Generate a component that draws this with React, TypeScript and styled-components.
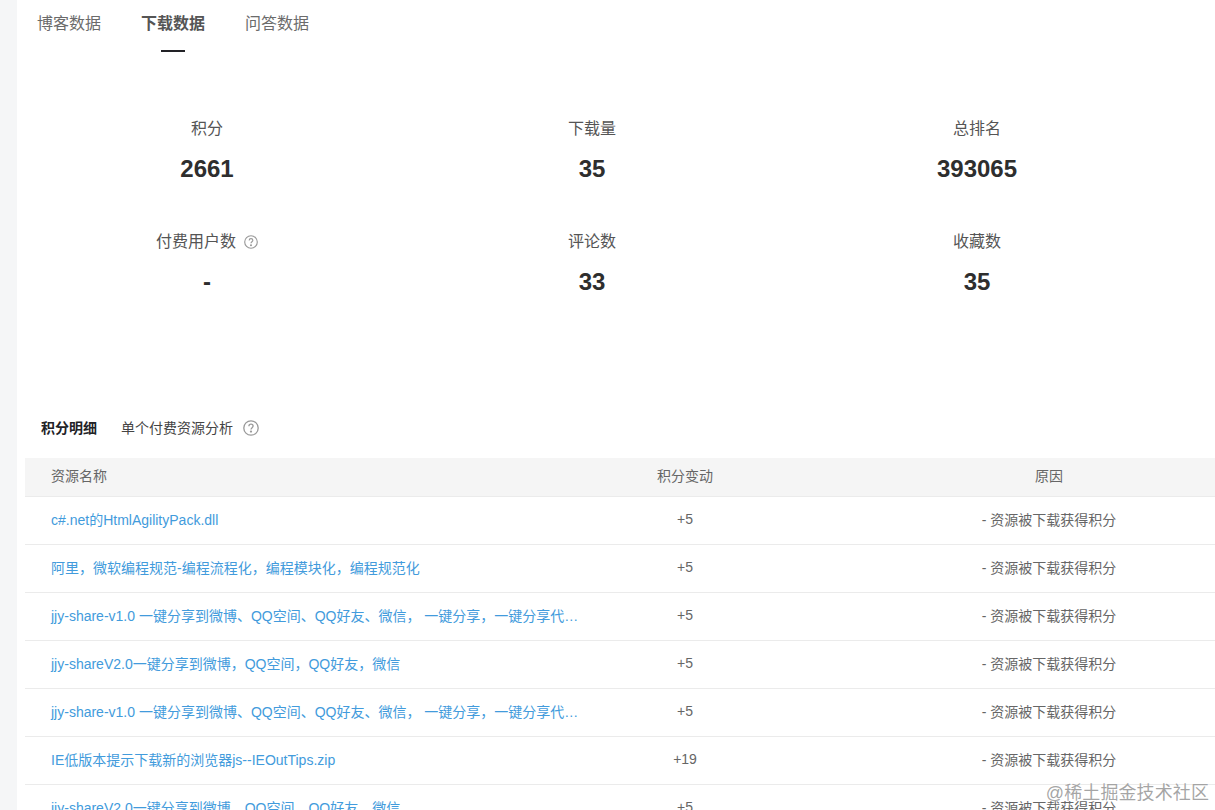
import React from 'react'
import styled, { createGlobalStyle } from 'styled-components'

const GlobalStyle = createGlobalStyle`
  html, body {
    margin: 0;
    padding: 0;
    height: 810px;
    overflow: hidden;
    background: #f5f6f7;
    font-family: "Liberation Sans", "Noto Sans CJK SC", sans-serif;
  }
  * { box-sizing: border-box; }
`

const Page = styled.div`
  position: relative;
  height: 810px;
  overflow: hidden;
  padding-left: 17px;
`

const Main = styled.main`
  background: #fff;
  height: 810px;
  width: 1300px;
`

const Tabs = styled.div`
  display: flex;
  gap: 40px;
  padding: 12px 0 0 20px;
  height: 112px;
`

const Tab = styled.div<{ $active?: boolean }>`
  position: relative;
  height: 23px;
  font-size: 16px;
  line-height: 23px;
  color: ${p => (p.$active ? '#555' : '#6b6b6b')};
  font-weight: ${p => (p.$active ? 700 : 400)};

  ${p =>
    p.$active &&
    `&::after {
      content: '';
      position: absolute;
      left: 20px;
      top: 38px;
      width: 24px;
      height: 2px;
      background: #222226;
    }`}
`

const StatGrid = styled.div`
  display: grid;
  grid-template-columns: repeat(3, 380px);
  column-gap: 5px;
  row-gap: 41px;
`

const Stat = styled.div`
  display: flex;
  flex-direction: column;
  align-items: center;
  height: 72px;
`

const StatLabel = styled.div`
  display: flex;
  align-items: center;
  gap: 8px;
  height: 20px;
  font-size: 16px;
  line-height: 20px;
  color: #555;
  margin-top: 7px;
`

const StatValue = styled.div`
  margin-top: 15px;
  height: 30px;
  font-size: 24px;
  line-height: 30px;
  font-weight: 700;
  color: #2e2e2e;
`

const SubTabs = styled.div`
  display: flex;
  align-items: center;
  margin-top: 121px;
  padding-left: 24px;
  height: 20px;
`

const SubTab = styled.div<{ $active?: boolean }>`
  font-size: 14px;
  line-height: 20px;
  color: ${p => (p.$active ? '#222226' : '#444')};
  font-weight: ${p => (p.$active ? 700 : 400)};
  margin-right: ${p => (p.$active ? 24 : 10)}px;
`

const Table = styled.div`
  margin: 20px 0 0 8px;
`

const Row = styled.div<{ $head?: boolean }>`
  display: grid;
  grid-template-columns: 565px 190px 538px;
  align-items: center;
  height: ${p => (p.$head ? 39 : 48)}px;
  padding-bottom: 4px;
  background: ${p => (p.$head ? '#f5f5f5' : '#fff')};
  border-bottom: 1px solid #ebebeb;
  font-size: 14px;
  color: #666;
`

const NameCell = styled.a`
  display: block;
  padding: 0 0 0 26px;
  white-space: nowrap;
  color: #429bdc;
`

const HeadName = styled.div`
  padding-left: 26px;
  color: #666;
`

const CenterCell = styled.div`
  text-align: center;
`

const Watermark = styled.div`
  position: absolute;
  right: 6px;
  bottom: 5px;
  font-size: 18px;
  line-height: 24px;
  letter-spacing: 0.1px;
  color: rgba(130, 130, 130, 0.72);
  text-shadow: 0 0 1px #fff;
`

const HelpIcon = ({ size }: { size: number }) => (
  <svg width={size} height={size} viewBox="0 0 16 16" fill="none" stroke="#999" strokeWidth="1.3">
    <circle cx="8" cy="8" r="7.2" />
    <path d="M5.9 6.2C5.9 5 6.9 4.2 8 4.2s2.1.8 2.1 1.9c0 1.5-2.1 1.7-2.1 3.4" />
    <circle cx="8" cy="11.6" r=".5" fill="#999" />
  </svg>
)

const stats = [
  { label: '积分', value: '2661' },
  { label: '下载量', value: '35' },
  { label: '总排名', value: '393065' },
  { label: '付费用户数', value: '-', help: true },
  { label: '评论数', value: '33' },
  { label: '收藏数', value: '35' },
]

const share1 = 'jjy-share-v1.0 一键分享到微博、QQ空间、QQ好友、微信， 一键分享，一键分享代…'
const share2 = 'jjy-shareV2.0一键分享到微博，QQ空间，QQ好友，微信'

const rows = [
  { name: 'c#.net的HtmlAgilityPack.dll', points: '+5' },
  { name: '阿里，微软编程规范-编程流程化，编程模块化，编程规范化', points: '+5' },
  { name: share1, points: '+5' },
  { name: share2, points: '+5' },
  { name: share1, points: '+5' },
  { name: 'IE低版本提示下载新的浏览器js--IEOutTips.zip', points: '+19' },
  { name: share2, points: '+5' },
]

export default function App() {
  return (
    <Page>
      <GlobalStyle />
      <Main>
        <Tabs>
          <Tab>博客数据</Tab>
          <Tab $active>下载数据</Tab>
          <Tab>问答数据</Tab>
        </Tabs>
        <StatGrid>
          {stats.map(s => (
            <Stat key={s.label}>
              <StatLabel>
                {s.label}
                {s.help && <HelpIcon size={14} />}
              </StatLabel>
              <StatValue>{s.value}</StatValue>
            </Stat>
          ))}
        </StatGrid>
        <SubTabs>
          <SubTab $active>积分明细</SubTab>
          <SubTab>单个付费资源分析</SubTab>
          <HelpIcon size={16} />
        </SubTabs>
        <Table>
          <Row $head>
            <HeadName>资源名称</HeadName>
            <CenterCell>积分变动</CenterCell>
            <CenterCell>原因</CenterCell>
          </Row>
          {rows.map((r, i) => (
            <Row key={i}>
              <NameCell>{r.name}</NameCell>
              <CenterCell>{r.points}</CenterCell>
              <CenterCell>- 资源被下载获得积分</CenterCell>
            </Row>
          ))}
        </Table>
      </Main>
      <Watermark>@稀土掘金技术社区</Watermark>
    </Page>
  )
}
